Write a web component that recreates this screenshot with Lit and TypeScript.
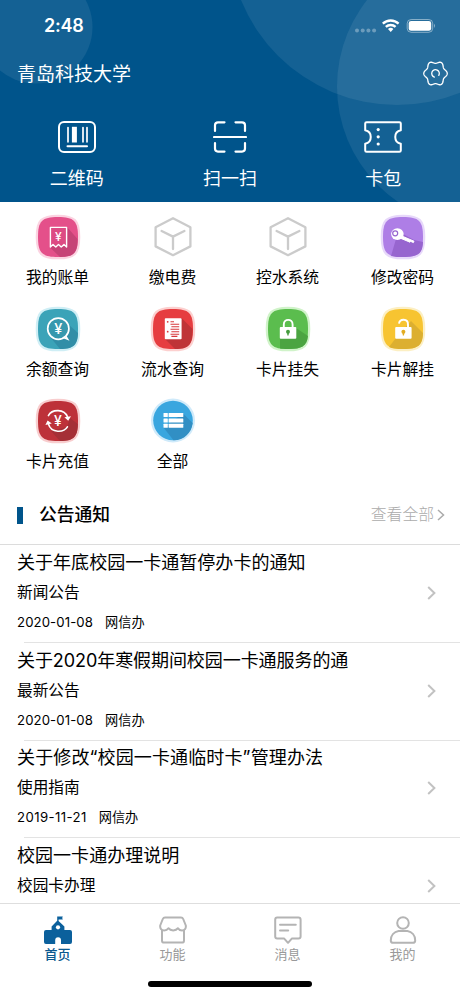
import { LitElement, html, svg, css } from "lit";
import { customElement } from "lit/decorators.js";

const TILE = "M22 2C38 2 42 6 42 22S38 42 22 42 2 38 2 22 6 2 22 2Z";

const tile = (fill: string, shade: string, halo: string, shadow: string, glyph: unknown) => html`
  <svg width="44" height="44" viewBox="0 0 44 44" overflow="visible">
    <path d=${TILE} fill=${halo} stroke=${halo} stroke-width="4.6" />
    <path d=${TILE} fill=${fill} />
    <path d=${shadow} fill=${shade} />
    ${glyph}
  </svg>`;

const cube = html`
  <svg width="44" height="44" viewBox="0 0 44 44" fill="none" stroke="#cbcbcb" stroke-width="2.3" stroke-linejoin="round" stroke-linecap="round">
    <path d="M22 3.2L39.4 12.2V31.4L22 40.2L4.6 31.4V12.2Z" />
    <path d="M10.6 16L22 21.6L33.4 16M22 21.6V34" />
  </svg>`;

const yen = (x: number, y: number, size: number) =>
  svg`<text class="yen" x=${x} y=${y} font-size=${size} text-anchor="middle">¥</text>`;

const receipt = tile("#e4508a", "#c64377", "#fbd3e1", "M31 12L41.5 24C41.5 38 38 42 24 42L14 32.5Z",
  svg`<path d="M14.4 32V12.4H30.6V32L28 29.6L25.2 32L22.5 29.6L19.8 32L17 29.6Z" fill="#dd4b84" stroke="#fff" stroke-width="1.4" stroke-linejoin="round"/>${yen(22.4, 26, 12)}`);

const balance = tile("#3ba3b8", "#318ea7", "#cfeef5", "M31 16L42 26C41.5 38 38 42 24 42L15 31Z",
  svg`<circle cx="22.3" cy="21.7" r="10.6" fill="#3698ae" stroke="#fff" stroke-width="1.7"/><path d="M27.6 30.6L31.6 32.2L29.6 28.8" fill="none" stroke="#fff" stroke-width="1.6"/>${yen(22.3, 26.8, 14.5)}`);

const statement = tile("#e63d40", "#bf3437", "#fcd0cf", "M30.5 11L41.5 22C41.5 38 38 42 24 42L14 32Z",
  svg`<rect x="13.8" y="11.2" width="16.8" height="21" rx=".8" fill="#fff"/>
  <path d="M19.5 14.7H23M19.5 17.2H28.2M20.4 19.7H28.2M19.5 22.2H28.2M20.4 24.7H28.2M19.5 27.2H28.2M20.4 29.4H26.4" stroke="#d73a3d" stroke-width="1.1"/>
  <circle cx="16.7" cy="14.8" r=".9" fill="#d73a3d"/><circle cx="16.7" cy="24.7" r=".9" fill="#d73a3d"/>`);

const key = tile("#ae7ee6", "#9765cf", "#e7d8fa", "M15 24L10 41C14 42 18 42 22 42C38 42 41.6 38 42 27L33 25L22 19Z",
  svg`<path d="M18 19.8L33 26.2L32.4 27.6L29.8 26.4L29 27.2L17 22.2Z" fill="#fff" stroke="#fff" stroke-width="1" stroke-linejoin="round"/>
  <ellipse cx="16.4" cy="19.1" rx="6.3" ry="5.9" fill="#fff"/><circle cx="14.2" cy="18.3" r="2.5" fill="#fff" stroke="#9765cf" stroke-width="1.2"/>`);

const keyhole = (x: number, color: string) =>
  svg`<circle cx=${x} cy="24.8" r="2" fill=${color}/><path d=${`M${x - 1} 25H${x + 1}L${x + 0.6} 28.6H${x - 0.6}Z`} fill=${color}/>`;

const lock = tile("#5bbd4e", "#4ba441", "#d0f3c9", "M30 21L42 29C41 39 36 42 22 42C19 42 16 41.8 14 41.5L14 31Z",
  svg`<path d="M17.8 20.5V17.4C17.8 11.4 26.6 11.4 26.6 17.4V20.5" fill="none" stroke="#fff" stroke-width="1.9"/><rect x="13.8" y="20" width="16.5" height="11.7" rx=".9" fill="#fff"/>${keyhole(22, "#459c3e")}`);

const unlock = tile("#f7c431", "#dcaf30", "#fcefc3", "M30 14L42 26C41.5 38 38 42 22 42C16 42 11 41.5 8 40L14.5 31.5Z",
  svg`<path d="M18 16.6C18.8 11.4 27 11.4 27 17.4V20.5" fill="none" stroke="#fff" stroke-width="1.9"/><rect x="14.2" y="20" width="16.4" height="11.7" rx=".9" fill="#fff"/>${keyhole(22.4, "#e2ac20")}`);

const recharge = tile("#bd3139", "#a52f36", "#f8cdce", "M34 19L41.8 25C41.5 38 38 42 24 42L15 32L31 28Z",
  svg`<path d="M12.4 16.6C16 9.8 28.4 9.6 31.6 18M31.4 27.8C28 33.6 15.4 34.6 12.4 25" fill="none" stroke="#fff" stroke-width="1.6" stroke-linecap="round"/>
  <path d="M28.4 18.2L35 17.2L32.2 21.8ZM9.4 26L11.6 21.4L15.8 24.4Z" fill="#fff"/>${yen(22, 27, 14)}`);

const all = html`
  <svg width="44" height="44" viewBox="0 0 44 44" overflow="visible">
    <circle cx="22" cy="21.5" r="22" fill="#cfeafa" /><circle cx="22" cy="21.5" r="19.8" fill="#39a6df" />
    <path d="M32 14.5L41.7 24C40.5 34 33 41.4 22.5 41.3L12.5 28.6Z" fill="#318fc4" />
    <g fill="#fff">
      <rect x="12.5" y="14" width="4.3" height="4" rx=".5" /><rect x="17.6" y="14" width="14.7" height="4" rx=".5" />
      <rect x="12.5" y="19.4" width="4.3" height="4" rx=".5" /><rect x="17.6" y="19.4" width="14.7" height="4" rx=".5" />
      <rect x="12.5" y="24.8" width="4.3" height="4" rx=".5" /><rect x="17.6" y="24.8" width="14.7" height="4" rx=".5" />
    </g>
  </svg>`;

const apps = [
  { label: "我的账单", icon: receipt },
  { label: "缴电费", icon: cube },
  { label: "控水系统", icon: cube },
  { label: "修改密码", icon: key },
  { label: "余额查询", icon: balance },
  { label: "流水查询", icon: statement },
  { label: "卡片挂失", icon: lock },
  { label: "卡片解挂", icon: unlock },
  { label: "卡片充值", icon: recharge },
  { label: "全部", icon: all },
];

const quick = [
  {
    label: "二维码",
    icon: html`<svg width="38" height="32" viewBox="0 0 38 32" fill="none" stroke="#fff" stroke-width="2">
      <rect x="1" y="1" width="36" height="30" rx="5" />
      <path d="M10 6.6V20.8M25 6.6V20.8M29 6.6V20.8" stroke-width="1.7" stroke-linecap="round" />
      <path d="M16.4 5.8V21.5" stroke-width="5" /><path d="M9.5 25.2H29" stroke-linecap="round" />
    </svg>`,
  },
  {
    label: "扫一扫",
    icon: html`<svg width="34" height="32" viewBox="0 0 34 32" fill="none" stroke="#fff" stroke-width="2.2" stroke-linecap="round">
      <path d="M2 10V4.2Q2 1.3 5 1.3H11.5M22.5 1.3H29Q32 1.3 32 4.2V10M2 22V27.6Q2 30.6 5 30.6H11.5M22.5 30.6H29Q32 30.6 32 27.6V22M1 16H33" />
    </svg>`,
  },
  {
    label: "卡包",
    icon: html`<svg width="38" height="32" viewBox="0 0 38 32" fill="none" stroke="#fff" stroke-width="2" stroke-linejoin="round">
      <path d="M2.6 1.2H35.4Q36.8 1.2 36.8 2.6V9.2C29.4 10.6 29.4 21.4 36.8 22.8V29.4Q36.8 30.8 35.4 30.8H2.6Q1.2 30.8 1.2 29.4V22.8C8.6 21.4 8.6 10.6 1.2 9.2V2.6Q1.2 1.2 2.6 1.2Z" />
      <g fill="#fff" stroke="none"><circle cx="14.2" cy="8.6" r="1.6" /><circle cx="14.2" cy="15.8" r="1.6" /><circle cx="14.2" cy="23" r="1.6" /></g>
    </svg>`,
  },
];

const notices = [
  { title: "关于年底校园一卡通暂停办卡的通知", kind: "新闻公告", date: "2020-01-08", by: "网信办", fit: "" },
  { title: "关于2020年寒假期间校园一卡通服务的通", kind: "最新公告", date: "2020-01-08", by: "网信办", fit: "tight" },
  { title: "关于修改“校园一卡通临时卡”管理办法", kind: "使用指南", date: "2019-11-21", by: "网信办", fit: "loose" },
  { title: "校园一卡通办理说明", kind: "校园卡办理", date: "", by: "", fit: "" },
];

const tabs = [
  {
    label: "首页",
    icon: html`<svg width="28" height="28" viewBox="0 0 28 28" fill="#0b609c">
      <path d="M13.2 4.8V.4H18.8L18.2 2L18.8 3.6H14.6V5L20.4 10.4V14H26Q28 14 28 16V26Q28 28 26 28H17V24.2A2.8 2.8 0 0 0 11.2 24.2V28H2Q0 28 0 26V16Q0 14 2 14H7.6V10.4Z" />
      <circle cx="14" cy="11.3" r="2.1" fill="#fff" />
    </svg>`,
  },
  {
    label: "功能",
    icon: html`<svg width="28" height="28" viewBox="0 0 28 28" fill="none" stroke="#b4b4b4" stroke-width="2" stroke-linejoin="round">
      <path d="M6 1.5H22Q23.6 1.5 24.2 3L26.8 9.5C27.2 12.6 25.6 14.4 23 14.4Q20.2 14.4 19 12.2Q17.4 14.4 14.2 14.4Q11 14.4 9.4 12.2Q8 14.4 5.2 14.4C2.4 14.4.9 12.6 1.2 9.5L3.8 3Q4.4 1.5 6 1.5Z" />
      <path d="M3 14V24.4Q3 26.6 5.2 26.6H22.8Q25 26.6 25 24.4V14" />
    </svg>`,
  },
  {
    label: "消息",
    icon: html`<svg width="28" height="28" viewBox="0 0 28 28" fill="none" stroke="#b4b4b4" stroke-width="2" stroke-linejoin="round" stroke-linecap="round">
      <path d="M3.2 1.6H24.4Q26.6 1.6 26.6 3.8V20.4Q26.6 22.4 24.4 22.4H18L14 26.8L10 22.4H3.2Q1.2 22.4 1.2 20.4V3.8Q1.2 1.6 3.2 1.6Z" />
      <path d="M6 8.8H21.8M6 14.6H14.2" />
    </svg>`,
  },
  {
    label: "我的",
    icon: html`<svg width="28" height="28" viewBox="0 0 28 28" fill="none" stroke="#b4b4b4" stroke-width="2">
      <circle cx="14" cy="7" r="5.8" />
      <path d="M9.6 15H18.4C23 15.8 26.2 19.6 26.2 24.4Q26.2 26.8 23.8 26.8H4.2Q1.8 26.8 1.8 24.4C1.8 19.6 5 15.8 9.6 15Z" />
    </svg>`,
  },
];

const gearPath = () => {
  const points: string[] = [];
  for (let i = 0; i < 120; i++) {
    const a = (i / 120) * Math.PI * 2;
    const r = 10.6 + 1.15 * Math.cos(6 * a);
    points.push(`${(12.5 + r * Math.cos(a)).toFixed(2)} ${(12.5 + r * 1.07 * Math.sin(a)).toFixed(2)}`);
  }
  return `M${points.join("L")}Z`;
};

@customElement("app-root")
export class AppRoot extends LitElement {
  static styles = css`
    :host {
      display: flex;
      flex-direction: column;
      height: 996px;
      overflow: hidden;
      background: #fff;
      color: #000;
      font-family: Inter, "Noto Sans CJK SC", sans-serif;
    }
    * { box-sizing: border-box; }
    svg { display: block; flex: none; }
    .header { position: relative; height: 202px; flex: none; background: #00548b; color: #fff; overflow: hidden; }
    .bubbles { position: absolute; inset: 0; }
    .status { position: relative; height: 50px; padding: 1px 25px 0 44px; display: flex; justify-content: space-between; align-items: center; }
    .time { font-size: 18px; font-weight: 600; line-height: 20px; letter-spacing: -0.2px; }
    .bar { position: relative; height: 48px; padding: 1px 12px 0 17px; display: flex; justify-content: space-between; align-items: center; }
    .school { font-size: 19px; line-height: 28px; padding-top: 1px; }
    .bar svg { margin-top: -3px; }
    .quick { position: relative; display: grid; grid-template-columns: repeat(3, 1fr); padding-top: 23px; }
    .action { display: flex; flex-direction: column; align-items: center; gap: 12px; }
    .action-label { font-size: 18px; line-height: 28px; }
    .apps { flex: none; display: grid; grid-template-columns: repeat(4, 1fr); grid-auto-rows: 92.2px; padding-top: 13px; height: 285px; }
    .app { display: flex; flex-direction: column; align-items: center; gap: 7px; }
    .app-label { font-size: 15.8px; line-height: 24px; }
    .yen { font-family: Inter, sans-serif; font-weight: 500; fill: #fff; }
    .section { flex: none; height: 58px; padding: 0 15px 1px 17px; display: flex; align-items: center; border-bottom: 1px solid #dcdcdc; }
    .mark { width: 6px; height: 17px; background: #00548b; }
    .heading { margin-left: 16px; font-size: 17.8px; line-height: 26px; font-weight: 500; flex: 1; }
    .more { font-size: 15.8px; line-height: 24px; color: #ababab; margin-right: 3px; font-weight: 300; }
    .list { flex: 1; min-height: 0; overflow: hidden; }
    .notice { height: 97.5px; padding: 4.5px 24px 0 17px; display: flex; align-items: center; }
    .notice + .notice { background: linear-gradient(#e3e3e3, #e3e3e3) 24px 0 / 100% 1px no-repeat; }
    .notice:first-child { height: 97px; padding-top: 4px; }
    .notice > svg { margin-top: -5px; }
    .copy { flex: 1; align-self: flex-start; display: flex; flex-direction: column; }
    .title { font-size: 18.05px; line-height: 28px; white-space: nowrap; }
    .tight .title { letter-spacing: -0.1px; }
    .loose .title { letter-spacing: 0.1px; }
    .kind { font-size: 15.7px; line-height: 24px; margin-top: 4px; }
    .meta { font-size: 13.2px; line-height: 20px; margin-top: 7px; display: flex; gap: 12px; }
    .date { letter-spacing: 0.1px; }
    .loose .date { letter-spacing: 0.4px; }
    .tabs { flex: none; height: 93px; border-top: 1px solid #dedede; display: grid; grid-template-columns: repeat(4, 1fr); grid-template-rows: 77px 6px; background: #fff; }
    .tab { display: flex; flex-direction: column; align-items: center; padding-top: 11.5px; gap: 0.5px; font-size: 13px; line-height: 20px; color: #999; }
    .tab.active { color: #0b5890; font-weight: 500; }
    .home { grid-column: 1 / -1; justify-self: center; width: 164px; height: 5.5px; border-radius: 3px; background: #000; }
  `;

  render() {
    return html`
      <div class="header">
        <svg class="bubbles" width="460" height="202" fill="#fff" fill-opacity=".08">
          <circle cx="36" cy="27" r="56.5" /><circle cx="397" cy="-63.4" r="168.4" /><circle cx="476.7" cy="86.5" r="139.7" />
        </svg>
        <div class="status">
          <span class="time">2:48</span>
          <svg width="81" height="16" viewBox="0 0 81 16" fill="#fff">
            <g opacity=".32"><circle cx="3" cy="12.5" r="2" /><circle cx="8.7" cy="12.5" r="2" /><circle cx="14.4" cy="12.5" r="2" /><circle cx="20.1" cy="12.5" r="2" /></g>
            <g fill="none" stroke="#fff" stroke-width="2.3"><path d="M28.8 5.7A11.4 11.4 0 0 1 44.6 5.7" /><path d="M31.8 8.9A7.2 7.2 0 0 1 41.6 8.9" /></g>
            <path d="M34 11.1A4 4 0 0 1 39.4 11.1L36.7 14Z" />
            <rect x="53.2" y="1.5" width="25.5" height="12.8" rx="4" fill="none" stroke="#fff" stroke-opacity=".45" />
            <rect x="54.7" y="3" width="22.5" height="9.8" rx="2.4" /><path d="M80 5.8Q81.8 7.8 80 9.9Z" opacity=".5" />
          </svg>
        </div>
        <div class="bar">
          <span class="school">青岛科技大学</span>
          <svg width="25" height="25" viewBox="0 0 25 25" fill="none" stroke="#fff" stroke-width="1.3" stroke-linecap="round" overflow="visible">
            <path d=${gearPath()} /><path d="M11.4 16.1A3.8 3.8 0 1 1 15.8 14.4" />
          </svg>
        </div>
        <div class="quick">
          ${quick.map((q) => html`<div class="action">${q.icon}<span class="action-label">${q.label}</span></div>`)}
        </div>
      </div>
      <div class="apps">
        ${apps.map((a) => html`<div class="app">${a.icon}<span class="app-label">${a.label}</span></div>`)}
      </div>
      <div class="section">
        <span class="mark"></span><span class="heading">公告通知</span><span class="more">查看全部</span>
        <svg width="8" height="12" viewBox="0 0 8 12" fill="none" stroke="#ababab" stroke-width="1.5"><path d="M1 1L6.5 6L1 11" /></svg>
      </div>
      <div class="list">
        ${notices.map((n) => html`
          <div class="notice ${n.fit}">
            <div class="copy">
              <span class="title">${n.title}</span>
              <span class="kind">${n.kind}</span>
              <span class="meta"><span class="date">${n.date}</span><span>${n.by}</span></span>
            </div>
            <svg width="9" height="14" viewBox="0 0 9 14" fill="none" stroke="#c2c2c2" stroke-width="2"><path d="M1.2 1L7.4 7L1.2 13" /></svg>
          </div>`)}
      </div>
      <div class="tabs">
        ${tabs.map((t, i) => html`<div class="tab ${i === 0 ? "active" : ""}">${t.icon}<span>${t.label}</span></div>`)}
        <span class="home"></span>
      </div>
    `;
  }
}
